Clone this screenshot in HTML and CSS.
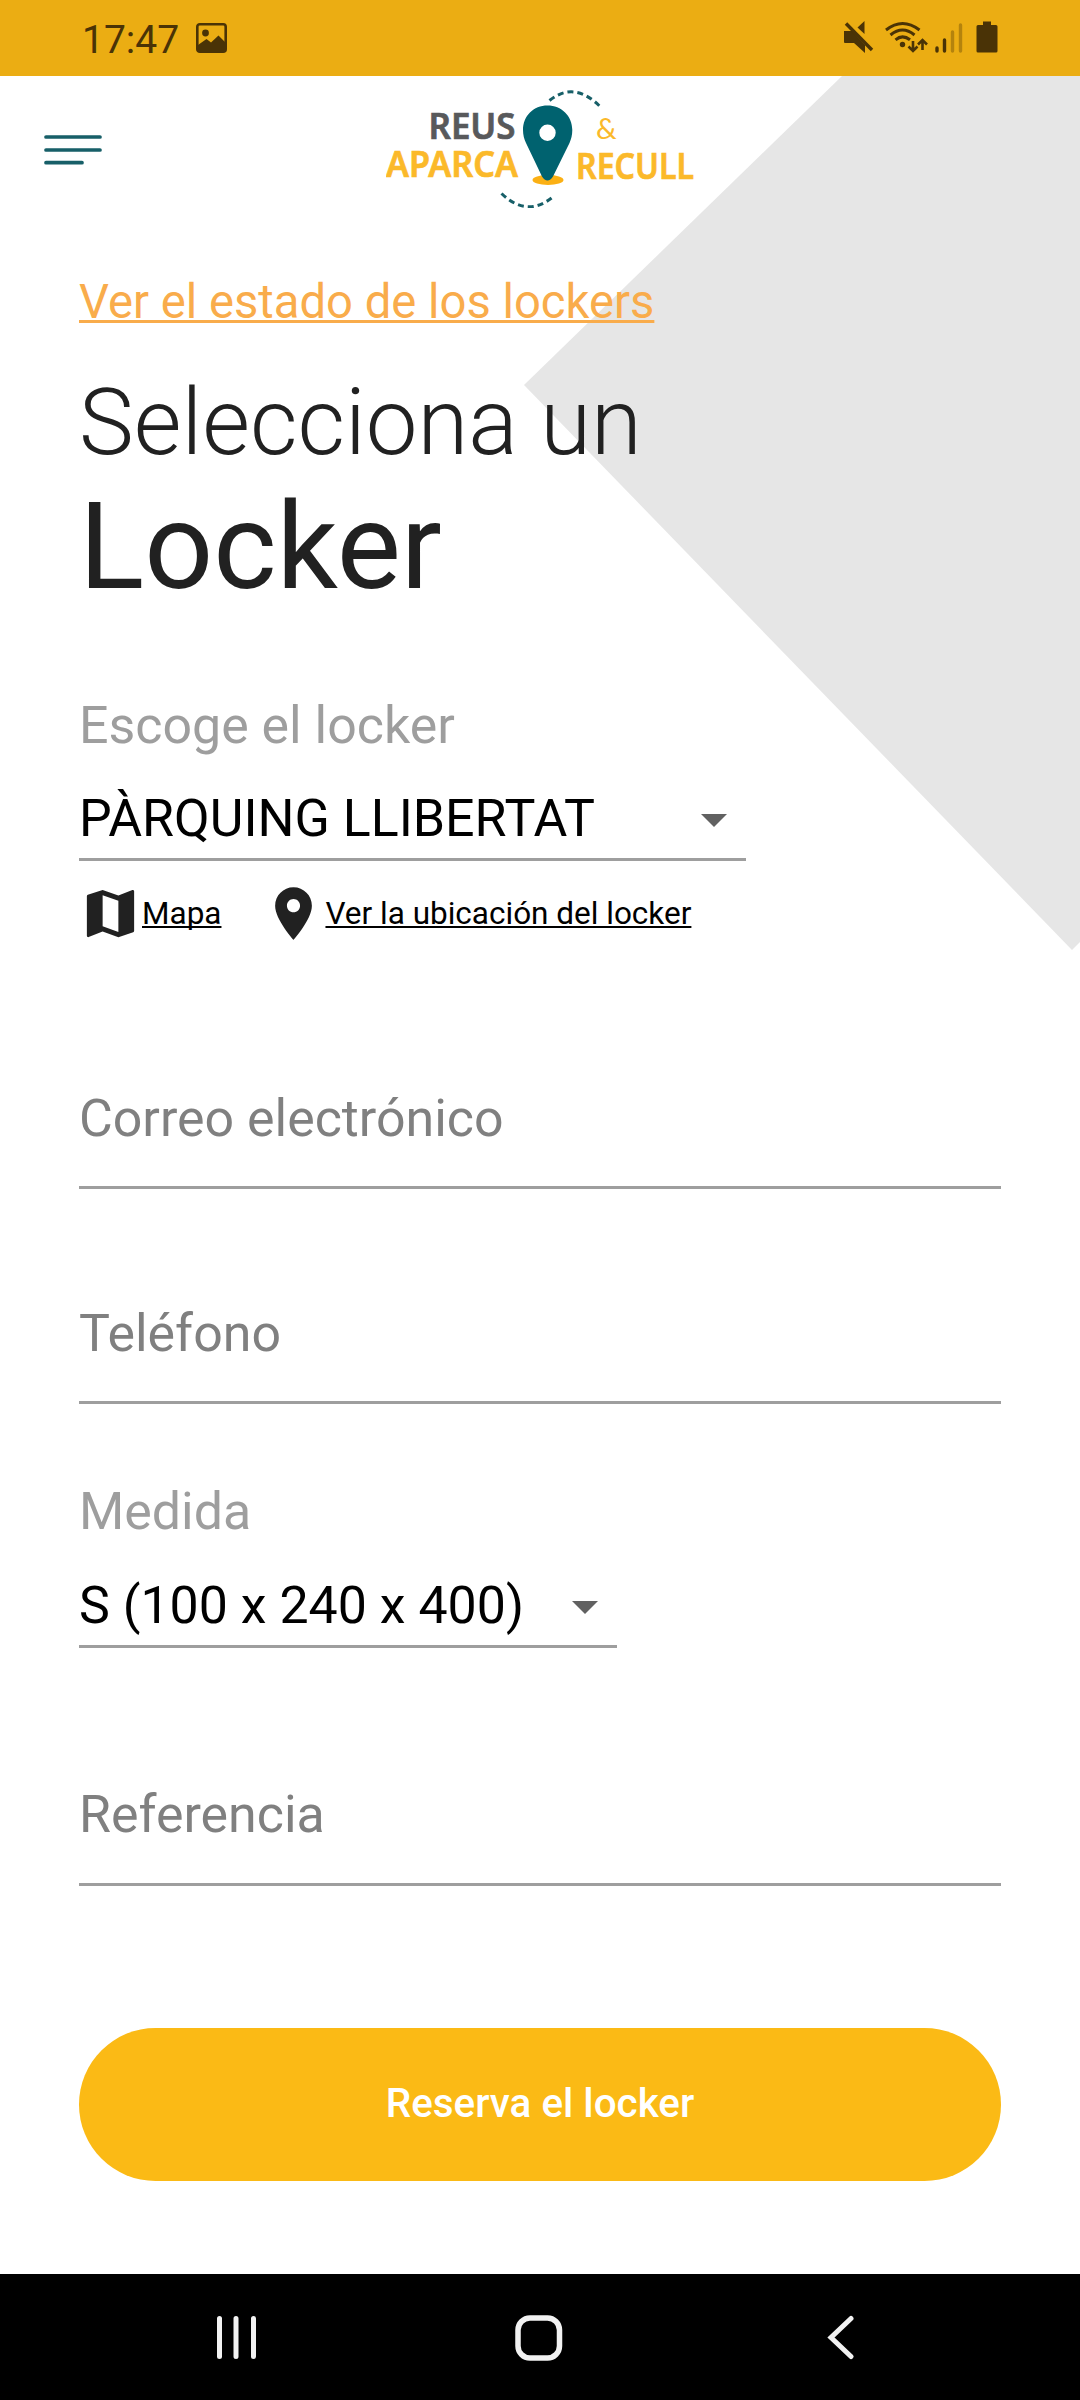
FILE: index.html
```html
<!DOCTYPE html>
<html lang="es">
<head>
<meta charset="utf-8">
<meta name="viewport" content="width=device-width, initial-scale=1">
<title>Reus Aparca &amp; Recull</title>
<link rel="stylesheet" href="styles.css">
</head>
<body>

<div class="statusbar">
  <span class="time">17:47</span>
  <svg class="picture" width="31" height="30" viewBox="0 0 31 30">
    <rect x="1.3" y="1.3" width="28.4" height="27.4" rx="2.5" fill="none" stroke="#4a3306" stroke-width="2.6"/>
    <circle cx="9.5" cy="10" r="3.4" fill="#4a3306"/>
    <path d="M2 22L10.500 16L15 19.500L22.500 12.500L29 19V28H2Z" fill="#4a3306"/>
  </svg>
  <svg class="signals" width="156" height="34" viewBox="0 0 156 34">
    <g fill="#4a3306">
      <path d="M0 10h8L21 24V32L10 22H1Q0 22 0 21Z"/>
      <path d="M13.500 6.500L20.500 0V13Z"/>
      <circle cx="58.500" cy="23.500" r="2.700"/>
      <path d="M139 2V0.500h8V4h5q1.500 0 1.500 1.500V30q0 1.500-1.500 1.500H134q-1.500 0-1.500-1.500V5.500Q132.500 4 134 4h5Z"/>
    </g>
    <g fill="none" stroke="#4a3306" stroke-width="3">
      <path d="M4 0L30 26.500" stroke="#ebad13" stroke-width="2"/>
      <path d="M2 2.500L28 29" stroke-width="3.400"/>
      <path d="M42 9Q58.500-4 75.500 9M46.500 14Q58.500 4 70.500 14M51.500 18.800Q58.500 13 66 18.800"/>
      <path d="M69 20v9M64.500 25.500l4.500 4.500l4.500-4.500M78.500 29V20M74 23.500l4.500-4.500l4.500 4.500" stroke-width="2.600"/>
    </g>
    <g stroke-width="3.400" stroke-linecap="round">
      <path d="M93 27v3M100.500 19v11" stroke="#4a3306"/>
      <path d="M108.500 11v19M116.500 4v26" stroke="#b4830d"/>
    </g>
  </svg>
</div>

<div class="page">
  <svg class="backdrop" width="556" height="875" viewBox="0 0 556 875">
    <path d="M318 0H556V866L548 874L0 309Z" fill="#e6e6e6"/>
  </svg>

  <header>
    <svg class="menu" width="58" height="30" viewBox="0 0 58 30">
      <path d="M2 2H56M2 15H56M2 27.700H38" stroke="#175f68" stroke-width="3.700" stroke-linecap="round"/>
    </svg>
    <svg class="logo" width="320" height="122" viewBox="0 0 320 122">
      <g class="logo-text">
        <text x="42.500" y="53" textLength="87" lengthAdjust="spacingAndGlyphs" fill="#58595b" stroke="#58595b">REUS</text>
        <text x="0" y="91" textLength="132" lengthAdjust="spacingAndGlyphs" fill="#fbb92a" stroke="#fbb92a">APARCA</text>
        <text x="190" y="93" textLength="118" lengthAdjust="spacingAndGlyphs" fill="#fbb92a" stroke="#fbb92a">RECULL</text>
      </g>
      <text class="amp" x="210" y="53" fill="#fbb92a">&amp;</text>
      <ellipse cx="162" cy="94" rx="15.500" ry="5" fill="#fbb014"/>
      <path fill-rule="evenodd" d="M161.500 19.500C147.500 19.500 137 30 137 44C137 49 138.200 53 140 57L156 90.500Q158.500 94.500 161.500 94.500T167 90.500L183.500 57C185.200 53 186.300 49 186.300 44C186.300 30 175.500 19.500 161.500 19.500ZM161.500 38.500A8.200 8.200 0 1 1 161.500 54.900A8.200 8.200 0 1 1 161.500 38.500Z" fill="#00626f"/>
      <path d="M163.500 14.500Q189-6 215.500 22M115.500 107.500Q142 133 168.500 109.500" class="dashes"/>
    </svg>
  </header>

  <main>
    <a class="status-link" href="#">Ver el estado de los lockers</a>
    <h1><span class="thin">Selecciona un</span><span class="big">Locker</span></h1>

    <form action="">
      <label for="locker">Escoge el locker</label>
      <div class="select locker">
        <select id="locker" name="locker">
          <option>PÀRQUING LLIBERTAT</option>
        </select>
        <span class="arrow"></span>
      </div>

      <div class="links">
        <svg width="63" height="63" viewBox="0 0 24 24"><path fill="#212121" d="M20.5 3l-.16.03L15 5.100 9 3 3.360 4.900c-.21.07-.36.25-.36.48V20.500c0 .28.22.5.5.5l.16-.03L9 18.900l6 2.100 5.640-1.900c.21-.07.36-.25.36-.48V3.500c0-.28-.22-.5-.5-.5zM15 19l-6-2.110V5l6 2.110V19z"/></svg>
        <a href="#">Mapa</a>
        <svg class="pin" width="63" height="63" viewBox="0 0 24 24"><path fill="#212121" d="M12 2C8.130 2 5 5.130 5 9c0 5.250 7 13 7 13s7-7.750 7-13c0-3.870-3.130-7-7-7zm0 9.500c-1.380 0-2.500-1.120-2.500-2.500s1.120-2.500 2.500-2.500 2.500 1.120 2.500 2.500-1.120 2.500-2.500 2.500z"/></svg>
        <a href="#">Ver la ubicación del locker</a>
      </div>

      <input class="email" type="text" name="email" placeholder="Correo electrónico">
      <input class="phone" type="text" name="phone" placeholder="Teléfono">

      <label for="size">Medida</label>
      <div class="select size">
        <select id="size" name="size">
          <option>S (100 x 240 x 400)</option>
        </select>
        <span class="arrow"></span>
      </div>

      <input class="reference" type="text" name="reference" placeholder="Referencia">

      <button type="submit" class="reserve">Reserva el locker</button>
    </form>
  </main>
</div>

<nav class="navbar">
  <svg width="42" height="46" viewBox="0 0 42 46"><path d="M3.500 3.500V41.500M20 3.500V41.500M37.500 3.500V41.500" stroke="#f2f2f2" stroke-width="5" stroke-linecap="round"/></svg>
  <svg width="48" height="46" viewBox="0 0 48 46"><rect x="3" y="3" width="41.500" height="40" rx="12" fill="none" stroke="#f2f2f2" stroke-width="5.500"/></svg>
  <svg width="42" height="46" viewBox="0 0 42 46"><path d="M31 3.500L11 22.500L31 41.500" fill="none" stroke="#f2f2f2" stroke-width="5" stroke-linecap="round"/></svg>
</nav>

</body>
</html>
```
FILE: styles.css
```css
* {
    box-sizing: border-box;
}

body {
    margin: 0;
    width: 1080px;
    height: 2400px;
    display: flex;
    flex-direction: column;
    overflow: hidden;
    font-family: Roboto, sans-serif;
    background-color: white;
}

svg {
    display: block;
    flex: none;
}

a {
    text-decoration-thickness: 2px;
    text-decoration-skip-ink: none;
    text-underline-offset: 2px;
}

.statusbar {
    display: flex;
    align-items: flex-start;
    height: 76px;
    padding: 0 80px 0 82px;
    background: #ebad13;
    color: #4a3306;
}

.time {
    width: 114px;
    padding-top: 16px;
    font-size: 39px;
    line-height: 48px;
}

.picture {
    margin-top: 23px;
}

.signals {
    margin: 21px 0 0 617px;
}

.page {
    position: relative;
    flex: 1;
}

.backdrop {
    position: absolute;
    top: 0;
    right: 0;
    z-index: -1;
}

header {
    display: flex;
    height: 197px;
    padding: 10px 44px;
}

.menu {
    margin-top: 49px;
}

.logo {
    margin-left: 284px;
}

.logo-text {
    font: 600 35.500px "Noto Sans", sans-serif;
    stroke-width: 0.7;
}

.amp {
    font: 29px Lato, sans-serif;
}

.dashes {
    fill: none;
    stroke: #175f68;
    stroke-width: 3;
    stroke-dasharray: 6 4;
}

main {
    padding: 0 79px;
}

.status-link {
    display: block;
    width: max-content;
    padding-top: 1px;
    color: #f9ac4b;
    font-size: 47.200px;
    line-height: 57px;
    text-decoration-thickness: 3px;
}

h1 {
    margin: 37px 0 79px;
    color: #212121;
    font-weight: 400;
}

h1 span {
    display: block;
}

.thin {
    font-size: 92.300px;
    font-weight: 300;
    line-height: 109px;
}

.big {
    font-size: 121px;
    line-height: 140px;
}

form {
    display: flex;
    flex-direction: column;
    align-items: flex-start;
}

label {
    color: #9e9e9e;
    font-size: 51.900px;
    line-height: 60px;
}

.select {
    display: flex;
    justify-content: space-between;
    height: 72px;
    border-bottom: 3px solid #9e9e9e;
}

.locker {
    width: 667px;
    margin-top: 33px;
}

.size {
    width: 538px;
    margin-top: 34px;
}

select {
    appearance: none;
    height: 60px;
    padding: 0;
    border: none;
    background: none;
    color: black;
    font: 51.900px/60px Roboto, sans-serif;
}

.arrow {
    width: 0;
    height: 0;
    margin: 25px 19px 0 0;
    border: 13px solid transparent;
    border-top-color: #616161;
    border-bottom: none;
}

.links {
    display: flex;
    align-items: center;
    height: 63px;
    margin-top: 21px;
}

.links a {
    color: black;
    font-size: 31.500px;
    line-height: 36px;
}

.links .pin {
    margin: 0 0 0 41px;
}

input {
    width: 922px;
    height: 101px;
    padding: 0 0 38px;
    border: none;
    border-bottom: 3px solid #9e9e9e;
    background: none;
    font: 51.900px/60px Roboto, sans-serif;
}

input::placeholder {
    color: #808080;
    opacity: 1;
}

.email {
    margin-top: 143px;
}

.phone {
    margin: 114px 0 78px;
}

.reference {
    height: 102px;
    margin-top: 136px;
    padding-bottom: 39px;
}

.reserve {
    width: 922px;
    height: 153px;
    margin-top: 142px;
    padding: 0 0 2px;
    border: none;
    border-radius: 77px;
    background: #fbba15;
    color: white;
    font: 500 40.400px/48px Roboto, sans-serif;
}

.navbar {
    display: flex;
    height: 126px;
    padding: 41px 218px 0 216px;
    justify-content: space-between;
    background: black;
}
```
